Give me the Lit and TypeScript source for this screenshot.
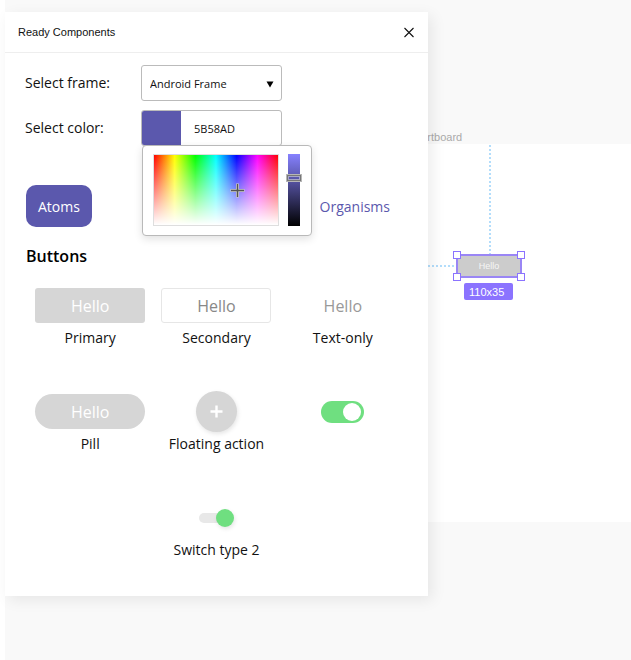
import { LitElement, html, css } from "lit";
import { customElement, property, state } from "lit/decorators.js";

/** Pop-over with the hue / saturation field and the brightness strip. */
@customElement("color-picker")
class ColorPicker extends LitElement {
  @property({ type: Number }) brightness = 69;

  static styles = css`
    :host {
      display: flex;
      gap: 7px;
      box-sizing: border-box;
      padding: 8px 9px 9px 10px;
      background: #fff;
      border: 1px solid #b9b9b9;
      border-radius: 4px;
      box-shadow: 0 3px 8px rgba(0, 0, 0, 0.12);
    }
    .spectrum {
      box-sizing: border-box;
      flex: 1;
      height: 72px;
      display: grid;
      border: 1px solid #dedede;
      background:
        linear-gradient(to bottom, rgba(255, 255, 255, 0), #fff),
        linear-gradient(to right, #f00, #ff0, #0f0, #0ff, #00f, #f0f, #f00);
    }
    .cross {
      position: absolute;
      left: 87px;
      top: 37px;
    }
    .level {
      appearance: none;
      writing-mode: vertical-lr;
      direction: rtl;
      margin: 0;
      width: 16px;
      height: 72px;
      background: linear-gradient(to bottom, #8681ff, #5b58ad 33%, #000) center / 12px 100% no-repeat;
    }
    .level::-webkit-slider-thumb {
      appearance: none;
      box-sizing: border-box;
      width: 16px;
      height: 8px;
      border: 2px solid #777;
      outline: 1px solid rgba(210, 210, 210, 0.7);
      outline-offset: -1px;
      background: transparent;
      box-shadow: inset 0 0 0 1px rgba(200, 200, 210, 0.7);
    }
  `;

  render() {
    return html`
      <div class="spectrum">
        <svg class="cross" width="15" height="15" viewBox="0 0 15 15" aria-hidden="true">
          <path d="M7.5 0.5V14.5M0.5 7.5H14.5" stroke="#ccc" stroke-width="3" />
          <path d="M7.5 1V14M1 7.5H14" stroke="#555" stroke-width="1.4" />
        </svg>
      </div>
      <input class="level" type="range" min="0" max="100" aria-label="Brightness" .value=${String(this.brightness)} />
    `;
  }
}

/** Side panel with the component library. */
@customElement("components-panel")
class ComponentsPanel extends LitElement {
  @state() color = "5B58AD";

  static styles = css`
    :host {
      display: block;
      background: #fff;
      box-shadow: 4px 4px 14px rgba(0, 0, 0, 0.08);
      font-family: "Open Sans", "Noto Sans", sans-serif;
      font-size: 14px;
      line-height: 24px;
      color: #111;
    }
    button,
    input,
    select {
      font-family: inherit;
      margin: 0;
    }
    button {
      padding: 0;
      border: 0;
      background: none;
      cursor: pointer;
    }
    .header {
      display: flex;
      align-items: center;
      justify-content: space-between;
      height: 40px;
      padding: 0 13px;
      border-bottom: 1px solid #eee;
    }
    .title {
      margin: 0;
      font: 400 11px/16px "Liberation Sans", Arial, sans-serif;
    }
    .close {
      display: grid;
    }
    .form {
      display: grid;
      grid-template-columns: 116px 141px;
      align-items: center;
      row-gap: 9px;
      padding: 12px 20px 0;
    }
    .field {
      position: relative;
      display: flex;
      box-sizing: border-box;
      height: 36px;
      border: 1px solid #bbb;
      border-radius: 3px;
    }
    .select {
      appearance: none;
      width: 100%;
      padding: 0 24px 0 8px;
      border: 0;
      background: none;
      font-size: 11px;
      color: #111;
    }
    .arrow {
      position: absolute;
      right: 7px;
      top: 15px;
      pointer-events: none;
    }
    .swatch {
      flex: none;
      width: 39px;
      border-radius: 2px 0 0 2px;
    }
    .hex {
      min-width: 0;
      flex: 1;
      padding: 0 0 0 13px;
      border: 0;
      background: none;
      font-size: 11px;
      color: #111;
    }
    .picker {
      position: absolute;
      z-index: 1;
      top: 34px;
      left: 0;
      width: 170px;
    }
    .tabs {
      display: flex;
      justify-content: space-between;
      padding: 39px 26px 0 21px;
    }
    .tab {
      height: 42px;
      padding: 0 12px;
      border-radius: 10px;
      font-size: 14px;
      color: #5b58ad;
    }
    .tab.active {
      background: #5b58ad;
      color: #fff;
    }
    .heading {
      margin: 17px 21px 0;
      font-size: 16px;
      font-weight: 600;
      line-height: 24px;
      color: #000;
    }
    .grid {
      display: grid;
      grid-template-columns: repeat(3, 1fr);
      row-gap: 41px;
      padding: 17px 22px 34px;
    }
    .cell {
      display: flex;
      flex-direction: column;
      align-items: center;
    }
    .middle {
      grid-column: 2;
    }
    .preview {
      display: grid;
      place-items: center;
      height: 41px;
    }
    .sample {
      box-sizing: border-box;
      width: 110px;
      height: 35px;
      font-size: 16px;
      border-radius: 3px;
    }
    .primary,
    .pill {
      background: #d6d6d6;
      color: #fff;
    }
    .secondary {
      border: 1px solid #e6e6e6;
      color: #888;
    }
    .plain {
      width: auto;
      color: #999;
    }
    .pill {
      border-radius: 18px;
    }
    .fab {
      display: grid;
      place-items: center;
      width: 41px;
      height: 41px;
      border-radius: 50%;
      background: #d6d6d6;
      box-shadow: 1px 2px 4px rgba(0, 0, 0, 0.1);
    }
    .toggle,
    .slide {
      appearance: none;
      display: flex;
      align-items: center;
      justify-content: flex-end;
      box-sizing: border-box;
      cursor: pointer;
    }
    .toggle {
      width: 43px;
      height: 22px;
      padding: 0 3px;
      border-radius: 11px;
      background: #6fdf80;
    }
    .slide {
      position: relative;
      width: 35px;
      height: 18px;
    }
    .slide::after {
      content: "";
      position: absolute;
      left: 0;
      width: 28px;
      height: 10px;
      border-radius: 5px;
      background: #e8e8e8;
    }
    .toggle::before,
    .slide::before {
      content: "";
      width: 18px;
      height: 18px;
      border-radius: 50%;
      background: #fff;
    }
    .slide::before {
      position: relative;
      z-index: 1;
      background: #6fdf80;
      box-shadow: 1px 2px 4px rgba(0, 0, 0, 0.1);
    }
  `;

  render() {
    return html`
      <header class="header">
        <h1 class="title">Ready Components</h1>
        <button class="close" aria-label="Close">
          <svg width="12" height="12" viewBox="0 0 12 12">
            <path d="M1.5 2L10.5 11M10.5 2L1.5 11" stroke="#111" stroke-width="1.1" />
          </svg>
        </button>
      </header>

      <div class="form">
        <label for="frame">Select frame:</label>
        <div class="field">
          <select class="select" id="frame">
            <option>Android Frame</option>
          </select>
          <svg class="arrow" width="8" height="7" viewBox="0 0 8 7" aria-hidden="true">
            <path d="M0.5 0.5H7.5L4 6.5Z" fill="#000" />
          </svg>
        </div>
        <label for="color">Select color:</label>
        <div class="field">
          <span class="swatch" style="background:#${this.color}"></span>
          <input class="hex" id="color" type="text" .value=${this.color} />
          <color-picker class="picker"></color-picker>
        </div>
      </div>

      <nav class="tabs">
        <button class="tab active">Atoms</button>
        <button class="tab">Organisms</button>
      </nav>

      <h2 class="heading">Buttons</h2>
      <div class="grid">
        <div class="cell">
          <div class="preview"><button class="sample primary">Hello</button></div>
          <span>Primary</span>
        </div>
        <div class="cell">
          <div class="preview"><button class="sample secondary">Hello</button></div>
          <span>Secondary</span>
        </div>
        <div class="cell">
          <div class="preview"><button class="sample plain">Hello</button></div>
          <span>Text-only</span>
        </div>
        <div class="cell">
          <div class="preview"><button class="sample pill">Hello</button></div>
          <span>Pill</span>
        </div>
        <div class="cell">
          <div class="preview">
            <button class="fab" aria-labelledby="fab-name">
              <svg width="13" height="13" viewBox="0 0 13 13">
                <path d="M6.5 0.5V12.5M0.5 6.5H12.5" stroke="#fff" stroke-width="2.4" />
              </svg>
            </button>
          </div>
          <span id="fab-name">Floating action</span>
        </div>
        <div class="cell">
          <div class="preview"><input class="toggle" type="checkbox" role="switch" aria-label="Switch" checked /></div>
        </div>
        <div class="cell middle">
          <div class="preview"><input class="slide" id="slide" type="checkbox" role="switch" checked /></div>
          <label for="slide">Switch type 2</label>
        </div>
      </div>
    `;
  }
}

/** Drawing canvas with one artboard and the selected layer. */
@customElement("design-canvas")
class DesignCanvas extends LitElement {
  static styles = css`
    :host {
      display: block;
      overflow: hidden;
      background: #f9f9f9;
      font: 11px/16px "Liberation Sans", Arial, sans-serif;
    }
    .name {
      position: absolute;
      left: 415px;
      top: 129px;
      color: #aaa;
    }
    .artboard {
      position: absolute;
      left: 415px;
      top: 144px;
      right: 0;
      height: 378px;
      background: #fff;
    }
    .guide-v,
    .guide-h {
      position: absolute;
    }
    .guide-v {
      left: 69px;
      top: 1px;
      width: 2px;
      height: 110px;
      background: repeating-linear-gradient(to bottom, #b3ddfb 0 2px, transparent 2px 4px);
    }
    .guide-h {
      left: 0;
      top: 121px;
      width: 37px;
      height: 2px;
      background: repeating-linear-gradient(to right, #b3ddfb 0 2px, transparent 2px 4px);
    }
    .layer {
      position: absolute;
      left: 36px;
      top: 110px;
      box-sizing: border-box;
      width: 66px;
      height: 24px;
      border: 2px solid #9a86f5;
      background: #ccc;
      color: #f6f6f6;
      font-size: 9px;
      line-height: 20px;
      text-align: center;
    }
    .handle {
      position: absolute;
      box-sizing: border-box;
      width: 8px;
      height: 8px;
      border: 1px solid #8b73ff;
      background: #fff;
    }
    .top { top: -5px; }
    .bottom { bottom: -5px; }
    .left { left: -5px; }
    .right { right: -5px; }
    .size {
      position: absolute;
      left: 44px;
      top: 139px;
      width: 49px;
      border-radius: 2px;
      background: #8b73ff;
      color: #fff;
      line-height: 18px;
      height: 17px;
      text-indent: 5px;
    }
  `;

  render() {
    return html`
      <span class="name">Artboard</span>
      <div class="artboard">
        <div class="guide-v"></div>
        <div class="guide-h"></div>
        <div class="layer">
          Hello
          <i class="handle top left"></i>
          <i class="handle top right"></i>
          <i class="handle bottom left"></i>
          <i class="handle bottom right"></i>
        </div>
        <div class="size">110x35</div>
      </div>
    `;
  }
}

@customElement("app-root")
class AppRoot extends LitElement {
  static styles = css`
    :host {
      display: block;
      box-sizing: border-box;
      min-height: 100vh;
      padding-left: 5px;
      background: #fff;
    }
    .workspace {
      position: relative;
      display: flow-root;
      min-height: 100vh;
    }
    .canvas {
      position: absolute;
      inset: 0;
    }
    .panel {
      position: relative;
      width: 100%;
      max-width: 423px;
      margin-top: 12px;
    }
  `;

  render() {
    return html`
      <main class="workspace">
        <design-canvas class="canvas"></design-canvas>
        <components-panel class="panel"></components-panel>
      </main>
    `;
  }
}
